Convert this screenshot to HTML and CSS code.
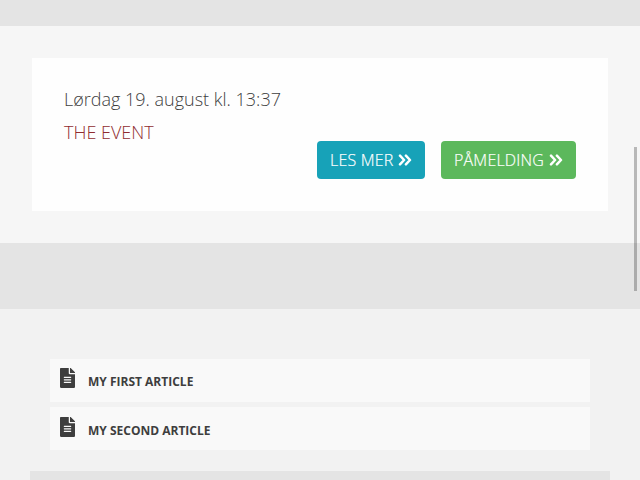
FILE: index.html
```
<!DOCTYPE html>
<html lang="nb">
<head>
<meta charset="utf-8">
<title>The Event</title>
<link rel="stylesheet" href="styles.css">
</head>
<body>
<svg class="defs" aria-hidden="true">
<symbol id="chevrons" viewBox="0 0 14 12"><path d="M2 1.7 6.100 6 2 10.300M7.900 1.700 12 6 7.900 10.300" fill="none" stroke="currentColor" stroke-width="2.500" stroke-linecap="round" stroke-linejoin="round"/></symbol>
<symbol id="file" viewBox="0 0 384 512"><path fill="currentColor" d="M224 136V0H24C10.700 0 0 10.700 0 24v464c0 13.300 10.700 24 24 24h336c13.300 0 24-10.700 24-24V160H248c-13.200 0-24-10.800-24-24zm64 236c0 6.600-5.400 12-12 12H108c-6.600 0-12-5.400-12-12v-8c0-6.600 5.400-12 12-12h168c6.600 0 12 5.400 12 12v8zm0-64c0 6.600-5.400 12-12 12H108c-6.600 0-12-5.400-12-12v-8c0-6.600 5.400-12 12-12h168c6.600 0 12 5.400 12 12v8zm0-72v8c0 6.600-5.400 12-12 12H108c-6.600 0-12-5.400-12-12v-8c0-6.600 5.400-12 12-12h168c6.600 0 12 5.400 12 12zm96-114.100v6.100H256V0h6.100c6.400 0 12.500 2.500 17 7l97.900 98c4.500 4.500 7 10.600 7 16.900z"/></symbol>
</svg>
<div class="band band-top"></div>
<section class="events">
<article class="event">
<p class="date">Lørdag 19. august kl. 13:37</p>
<h2 class="title">THE EVENT</h2>
<div class="actions">
<a class="btn btn-info">LES MER <svg class="chev"><use href="#chevrons"/></svg></a>
<a class="btn btn-success">PÅMELDING <svg class="chev"><use href="#chevrons"/></svg></a>
</div>
</article>
</section>
<div class="band band-middle"></div>
<section class="articles">
<a class="article"><svg class="file"><use href="#file"/></svg><span>MY FIRST ARTICLE</span></a>
<a class="article article-last"><svg class="file"><use href="#file"/></svg><span>MY SECOND ARTICLE</span></a>
<div class="panel"></div>
</section>
<div class="scroll-thumb"></div>
</body>
</html>
```
FILE: styles.css
```
* { box-sizing: border-box; }
html, body { margin: 0; height: 480px; overflow: hidden; }
body { background: #f2f2f2; font-family: "Open Sans", sans-serif; color: #3e3e3e; }
.defs { display: none; }
.band { background: #e4e4e4; }
.band-top { height: 26px; }
.band-middle { height: 66px; }
.events { height: 217px; padding: 32px; background: #f6f6f6; }
.event { height: 153px; padding: 28px 32px 32px; background: #fefefe; }
.date, .title { margin: 0; font-size: 18px; font-weight: 300; line-height: 27px; }
.title { margin-top: 6px; color: #902c30; }
.actions { display: flex; justify-content: flex-end; gap: 16px; margin-top: -5px; }
.btn { display: flex; align-items: center; justify-content: space-between; height: 38px; padding: 0 13px; border-radius: 4px; color: #fff; font-size: 16px; font-weight: 300; letter-spacing: 0.2px; -webkit-text-stroke: 0.2px #fff; white-space: nowrap; }
.btn-info { width: 108px; background: #17a2b8; }
.btn-success { width: 135px; background: #5cb85c; }
.chev { width: 14px; height: 12px; flex: none; }
.articles { padding: 50px 30px 0; }
.article { display: flex; align-items: center; height: 43px; margin: 0 20px 5px; padding-left: 10px; background: #f9f9f9; font-size: 12px; font-weight: 700; }
.article-last { padding-top: 2px; }
.file { width: 15px; height: 20px; margin: -5px 13px 0 0; flex: none; }
.article span { padding-top: 2px; }
.panel { height: 20px; margin-top: 21px; background: #e4e4e4; }
.scroll-thumb { position: absolute; left: 634px; top: 147px; width: 3px; height: 144px; background: rgba(0, 0, 0, 0.25); }
```
